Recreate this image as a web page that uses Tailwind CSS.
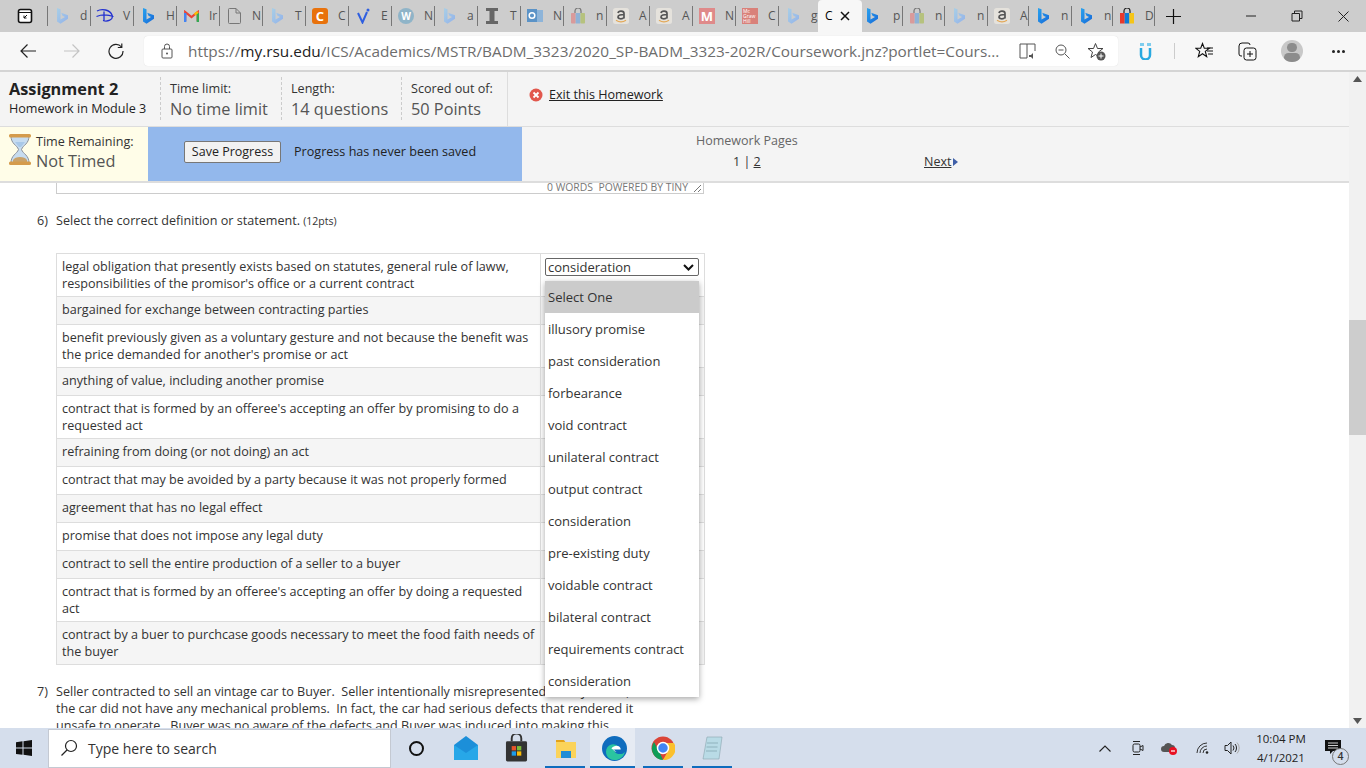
<!DOCTYPE html>
<html lang="en">
<head>
    <meta charset="UTF-8">
    <title>Coursework</title>
    <script src="https://cdn.jsdelivr.net/npm/@tailwindcss/browser@4"></script>
</head>
<body class="bg-white text-[#333] font-['Open_Sans',sans-serif] overflow-hidden">
<!-- shared tab icons -->
<svg class="absolute w-0 h-0">
    <defs>
        <linearGradient id="bgrad" x1="0" y1="0" x2="1" y2="1"><stop offset="0" stop-color="#2aa3ee"/><stop offset="1" stop-color="#1668d8"/></linearGradient>
        <linearGradient id="bfade" x1="0" y1="0" x2="1" y2="1"><stop offset="0" stop-color="#a9cfe6"/><stop offset="1" stop-color="#92b2ea"/></linearGradient>
    </defs>
    <symbol id="bing" viewBox="0 0 11 16"><path d="M0 0l3.500 1.200V11.500L8 9 5.500 7.800 4.200 4.800 11 7.200v3.600L3.500 15.700 0 13.500z" fill="url(#bgrad)"/></symbol>
    <symbol id="bingfade" viewBox="0 0 11 16"><path d="M0 0l3.500 1.200V11.500L8 9 5.500 7.800 4.200 4.800 11 7.200v3.600L3.500 15.700 0 13.500z" fill="url(#bfade)"/></symbol>
    <symbol id="bag" viewBox="0 0 16 16"><path d="M5 5V3a3 3 0 0 1 6 0v2" fill="none" stroke="#777" stroke-width="1.200"/><rect x="1" y="5" width="4.700" height="10.500" rx=".8" fill="#d99a9a"/><rect x="5.700" y="5" width="4.700" height="10.500" fill="#8fb2d6"/><rect x="10.400" y="5" width="4.600" height="10.500" rx=".8" fill="#b6c27e"/></symbol>
    <symbol id="amazon" viewBox="0 0 16 16"><rect width="16" height="16" rx="2.500" fill="#e5e2dc"/><path d="M5 5c.5-2.500 6-2.500 6 .5v5M11 6.500C8 6.500 5 7 5 9s4 2.500 6 .5" fill="none" stroke="#555" stroke-width="1.700"/><path d="M3 12.300c3 2 7 2 10 0" fill="none" stroke="#e3a857" stroke-width="1.200"/></symbol>
</svg>

<div class="w-[1366px] h-[768px] flex flex-col overflow-hidden">
    <!-- TAB STRIP -->
    <div class="h-[32px] bg-[#cdcdcd] flex items-center shrink-0 text-[12px] text-[#555] relative">
        <div class="w-[47px] flex justify-center pl-[2px]">
            <svg width="16" height="16" viewBox="0 0 16 16"><rect x="1.500" y="1.500" width="13" height="13" rx="2" fill="#fff" stroke="#111" stroke-width="1.600"/><path d="M1.500 4.500h13" stroke="#111"/><path d="M10 7l-3 3M7 7.500V10h2.500" fill="none" stroke="#111"/></svg>
        </div>
        <div class="w-[43px] h-[20px] border-l border-[#777] flex items-center pl-[2px] overflow-hidden"><div class="w-[24px] flex justify-center"><svg class="w-[11px] h-[16px]"><use href="#bingfade"/></svg></div><span class="ml-[6px]">d</span></div>
        <div class="w-[43px] h-[20px] border-l border-[#777] flex items-center pl-[2px] overflow-hidden"><div class="w-[24px] flex justify-center"><svg width="18" height="16" viewBox="0 0 18 16"><path d="M1 3c5-3 13-1 15 4s-5 7-9 5.500M8 3.500V13M.5 8.500c5-2 11-2 17 0" fill="none" stroke="#2231d0" stroke-width="1.300"/></svg></div><span class="ml-[6px]">V</span></div>
        <div class="w-[43px] h-[20px] border-l border-[#777] flex items-center pl-[2px] overflow-hidden"><div class="w-[24px] flex justify-center"><svg class="w-[11px] h-[16px]"><use href="#bing"/></svg></div><span class="ml-[6px]">H</span></div>
        <div class="w-[43px] h-[20px] border-l border-[#777] flex items-center pl-[2px] overflow-hidden"><div class="w-[24px] flex justify-center"><svg width="15" height="12" viewBox="0 0 15 12"><path d="M1.200 11V2l6.300 5 6.300-5v9" fill="none" stroke="#ea4335" stroke-width="2.200"/><path d="M1.200 12V3" stroke="#4285f4" stroke-width="2.400"/><path d="M13.800 12V3" stroke="#34a853" stroke-width="2.400"/><path d="M10.500 4.500l3.300-2.500" stroke="#fbbc04" stroke-width="2.200"/></svg></div><span class="ml-[6px]">Ir</span></div>
        <div class="w-[43px] h-[20px] border-l border-[#777] flex items-center pl-[2px] overflow-hidden"><div class="w-[24px] flex justify-center"><svg width="13" height="16" viewBox="0 0 13 16"><path d="M1.500.500h6.500l4.500 4.500v9.500a1 1 0 0 1-1 1h-10a1 1 0 0 1-1-1V1.500a1 1 0 0 1 1-1zM8 .500v4.500h4.500" fill="none" stroke="#777"/></svg></div><span class="ml-[6px]">N</span></div>
        <div class="w-[43px] h-[20px] border-l border-[#777] flex items-center pl-[2px] overflow-hidden"><div class="w-[24px] flex justify-center"><svg class="w-[11px] h-[16px]"><use href="#bingfade"/></svg></div><span class="ml-[6px]">T</span></div>
        <div class="w-[43px] h-[20px] border-l border-[#777] flex items-center pl-[2px] overflow-hidden"><div class="w-[24px] flex justify-center"><div class="w-[16px] h-[16px] bg-[#e8720c] rounded-[3px] text-white font-bold text-[13px] leading-[16px] text-center">C</div></div><span class="ml-[6px]">C</span></div>
        <div class="w-[43px] h-[20px] border-l border-[#777] flex items-center pl-[2px] overflow-hidden"><div class="w-[24px] flex justify-center"><svg width="13" height="16" viewBox="0 0 13 16"><path d="M1 5l4.500 9.500L10 4" fill="none" stroke="#2f5fe0" stroke-width="2"/><circle cx="11" cy="2" r="1.500" fill="#2f5fe0"/></svg></div><span class="ml-[6px]">E</span></div>
        <div class="w-[43px] h-[20px] border-l border-[#777] flex items-center pl-[2px] overflow-hidden"><div class="w-[24px] flex justify-center"><div class="w-[16px] h-[16px] bg-[#8fb4c8] rounded-full text-white font-bold text-[10px] leading-[16px] text-center">W</div></div><span class="ml-[6px]">N</span></div>
        <div class="w-[43px] h-[20px] border-l border-[#777] flex items-center pl-[2px] overflow-hidden"><div class="w-[24px] flex justify-center"><svg class="w-[11px] h-[16px]"><use href="#bingfade"/></svg></div><span class="ml-[6px]">a</span></div>
        <div class="w-[43px] h-[20px] border-l border-[#777] flex items-center pl-[2px] overflow-hidden"><div class="w-[24px] flex justify-center"><svg width="12" height="16" viewBox="0 0 12 16"><path d="M0 0h12v3H8.500v10H12v3H0v-3h3.500V3H0z" fill="#666"/></svg></div><span class="ml-[6px]">T</span></div>
        <div class="w-[43px] h-[20px] border-l border-[#777] flex items-center pl-[2px] overflow-hidden"><div class="w-[24px] flex justify-center"><svg width="16" height="16" viewBox="0 0 16 16"><rect x="5" y="2" width="11" height="12" fill="#8db4d9"/><rect y="1" width="10" height="13" fill="#5b93c7"/><circle cx="5" cy="7.500" r="2.800" fill="none" stroke="#fff" stroke-width="1.500"/></svg></div><span class="ml-[6px]">N</span></div>
        <div class="w-[43px] h-[20px] border-l border-[#777] flex items-center pl-[2px] overflow-hidden"><div class="w-[24px] flex justify-center"><svg class="w-[16px] h-[16px]"><use href="#bag"/></svg></div><span class="ml-[6px]">n</span></div>
        <div class="w-[43px] h-[20px] border-l border-[#777] flex items-center pl-[2px] overflow-hidden"><div class="w-[24px] flex justify-center"><svg class="w-[16px] h-[16px]"><use href="#amazon"/></svg></div><span class="ml-[6px]">A</span></div>
        <div class="w-[43px] h-[20px] border-l border-[#777] flex items-center pl-[2px] overflow-hidden"><div class="w-[24px] flex justify-center"><svg class="w-[16px] h-[16px]"><use href="#amazon"/></svg></div><span class="ml-[6px]">A</span></div>
        <div class="w-[43px] h-[20px] border-l border-[#777] flex items-center pl-[2px] overflow-hidden"><div class="w-[24px] flex justify-center"><div class="w-[16px] h-[16px] bg-[#df8a8a] text-white font-bold text-[13px] leading-[16px] text-center">M</div></div><span class="ml-[6px]">N</span></div>
        <div class="w-[43px] h-[20px] border-l border-[#777] flex items-center pl-[2px] overflow-hidden"><div class="w-[24px] flex justify-center"><div class="w-[16px] h-[16px] bg-[#d9817a] text-white text-[5px] leading-[5px] pl-[1px] pt-[1px]">Mc Graw Hill</div></div><span class="ml-[6px]">C</span></div>
        <div class="w-[43px] h-[20px] border-l border-[#777] flex items-center pl-[2px] overflow-hidden"><div class="w-[24px] flex justify-center"><svg class="w-[11px] h-[16px]"><use href="#bingfade"/></svg></div><span class="ml-[6px]">g</span></div>
        <!-- active tab -->
        <div class="w-[44px] -ml-[3px] h-[32px] bg-[#f7f7f7] rounded-t-[4px] flex items-center pl-[7px] text-black relative"><span>C</span><svg class="ml-[7px]" width="10" height="10" viewBox="0 0 10 10"><path d="M1 1l8 8M9 1l-8 8" stroke="#111" stroke-width="1.500"/></svg></div>
        <div class="w-[40px] h-[20px] flex items-center overflow-hidden"><div class="w-[24px] -ml-[2px] flex justify-center"><svg class="w-[11px] h-[16px]"><use href="#bing"/></svg></div><span class="ml-[9px]">p</span></div>
        <div class="w-[42px] h-[20px] border-l border-[#777] flex items-center pl-[2px] overflow-hidden"><div class="w-[24px] flex justify-center"><svg class="w-[16px] h-[16px]"><use href="#bag"/></svg></div><span class="ml-[6px]">n</span></div>
        <div class="w-[43px] h-[20px] border-l border-[#777] flex items-center pl-[2px] overflow-hidden"><div class="w-[24px] flex justify-center"><svg class="w-[11px] h-[16px]"><use href="#bingfade"/></svg></div><span class="ml-[6px]">n</span></div>
        <div class="w-[41px] h-[20px] border-l border-[#777] flex items-center pl-[2px] overflow-hidden"><div class="w-[24px] flex justify-center"><svg class="w-[16px] h-[16px]"><use href="#amazon"/></svg></div><span class="ml-[6px]">A</span></div>
        <div class="w-[43px] h-[20px] border-l border-[#777] flex items-center pl-[2px] overflow-hidden"><div class="w-[24px] flex justify-center"><svg class="w-[11px] h-[16px]"><use href="#bing"/></svg></div><span class="ml-[6px]">n</span></div>
        <div class="w-[41px] h-[20px] border-l border-[#777] flex items-center pl-[2px] overflow-hidden"><div class="w-[24px] flex justify-center"><svg class="w-[11px] h-[16px]"><use href="#bing"/></svg></div><span class="ml-[6px]">n</span></div>
        <div class="w-[43px] h-[20px] border-x border-[#777] flex items-center pl-[2px] overflow-hidden">
            <div class="w-[24px] flex justify-center"><svg width="16" height="16" viewBox="0 0 16 16"><path d="M5 5V3a3 3 0 0 1 6 0v2" fill="none" stroke="#222" stroke-width="1.200"/><rect x="1" y="5" width="4.700" height="10.500" fill="#e8392b"/><rect x="5.700" y="5" width="4.700" height="10.500" fill="#0c7bd8"/><rect x="10.400" y="5" width="4.600" height="10.500" fill="#f5c518"/></svg></div><span class="ml-[6px]">D</span>
        </div>
        <svg class="ml-[11px]" width="15" height="15" viewBox="0 0 15 15"><path d="M7.500 0v15M0 7.500h15" stroke="#111" stroke-width="1.200"/></svg>
        <!-- window controls -->
        <div class="ml-auto flex items-center h-full">
            <div class="w-[46px] flex justify-center"><svg width="10" height="10" viewBox="0 0 10 10"><path d="M0 5h10" stroke="#222"/></svg></div>
            <div class="w-[46px] flex justify-center"><svg width="12" height="12" viewBox="0 0 12 12"><path d="M1 3.500h7.500V11H1zM3.500 3.500V1H11v7.500H8.500" fill="none" stroke="#222"/></svg></div>
            <div class="w-[46px] flex justify-center"><svg width="11" height="11" viewBox="0 0 11 11"><path d="M.5.500l10 10M10.500.500l-10 10" stroke="#222"/></svg></div>
        </div>
    </div>

    <!-- ADDRESS BAR -->
    <div class="h-[38px] bg-[#f7f7f7] flex items-center shrink-0">
        <div class="w-[56px] flex justify-center"><svg width="16" height="16" viewBox="0 0 16 16"><path d="M16 8H1M7.500 1.500L1 8l6.500 6.500" fill="none" stroke="#222" stroke-width="1.200"/></svg></div>
        <div class="w-[32px] flex justify-center"><svg width="16" height="16" viewBox="0 0 16 16"><path d="M0 8h15M8.500 1.500L15 8l-6.500 6.500" fill="none" stroke="#c4c4c4" stroke-width="1.200"/></svg></div>
        <div class="w-[56px] flex justify-center"><svg width="16" height="16" viewBox="0 0 16 16"><path d="M13.500 4A7 7 0 1 0 15 8M13.800 .500V4.500H9.800" fill="none" stroke="#222" stroke-width="1.200"/></svg></div>
        <div class="w-[974px] h-[30px] bg-white rounded-[4px] flex items-center shadow-[0_0_1px_rgba(0,0,0,0.15)]">
            <svg class="ml-[17px] shrink-0" width="12" height="16" viewBox="0 0 12 16"><rect x="1" y="6" width="10" height="9" rx="1" fill="none" stroke="#555"/><path d="M3.500 6V3.500a2.500 2.500 0 0 1 5 0V6" fill="none" stroke="#555"/><circle cx="6" cy="10.500" r="1" fill="#555"/></svg>
            <div class="ml-[15px] pt-[2px] text-[15.350px] text-[#6d6d6d] whitespace-nowrap w-[813px] overflow-hidden">https://<span class="text-[#222]">my.rsu.edu</span>/ICS/Academics/MSTR/BADM_3323/2020_SP-BADM_3323-202R/Coursework.jnz?portlet=Cours...</div>
            <svg class="ml-[18px] shrink-0" width="18" height="18" viewBox="0 0 18 18"><path d="M1 2h7v14H1zM8 2h8v7" fill="none" stroke="#555"/><path d="M10 13h2l2-2v6l-2-2h-2z" fill="#555"/></svg>
            <svg class="ml-[18px] shrink-0" width="15" height="15" viewBox="0 0 15 15"><circle cx="6" cy="6" r="5" fill="none" stroke="#555"/><path d="M3.500 6h5M10 10l4.500 4.500" fill="none" stroke="#555"/></svg>
            <svg class="ml-[17px] shrink-0" width="19" height="19" viewBox="0 0 19 19"><path d="M8.500 1.500l2 5h5.500l-4.500 3.500 1.500 5.500-4.500-3-4.500 3 1.500-5.500L1 6.500h5.500z" fill="none" stroke="#444"/><circle cx="14" cy="14" r="4.500" fill="#555"/><path d="M14 11.500v5M11.500 14h5" stroke="#fff"/></svg>
        </div>
        <svg class="ml-[21px]" width="13" height="18" viewBox="0 0 13 18"><path d="M2 6v7a4.500 4.500 0 0 0 9 0V6" fill="none" stroke="#29a9e0" stroke-width="2.500"/><path d="M1 1h4v3H1zM8 1h4v3H8z" fill="#7fcdee"/></svg>
        <div class="w-px h-[16px] bg-[#ccc] ml-[22px]"></div>
        <svg class="ml-[20px]" width="19" height="18" viewBox="0 0 19 18"><path d="M7.500 1.500l1.800 4.700h5l-4 3.200 1.400 5.300-4.200-3-4.200 3 1.400-5.300-4-3.200h5z" fill="none" stroke="#111" stroke-width="1.100"/><path d="M12 9h6M13 12h5M12 6h6" stroke="#111"/></svg>
        <svg class="ml-[24px]" width="19" height="19" viewBox="0 0 19 19"><path d="M4 14H3a2 2 0 0 1-2-2V4a3 3 0 0 1 3-3h6a2 2 0 0 1 2 2" fill="none" stroke="#111"/><rect x="6" y="6" width="12" height="12" rx="2.500" fill="none" stroke="#111"/><path d="M12 9v6M9 12h6" stroke="#111"/></svg>
        <div class="ml-[24px] w-[22px] h-[22px] rounded-full bg-[#c8c8c8] overflow-hidden flex flex-col items-center">
            <div class="w-[10px] h-[10px] mt-[3px] rounded-full bg-[#8c8c8c]"></div>
            <div class="w-[16px] h-[10px] mt-[1px] rounded-full bg-[#8c8c8c]"></div>
        </div>
        <div class="ml-[29px] flex gap-[2px]"><div class="w-[3px] h-[3px] rounded-full bg-[#222]"></div><div class="w-[3px] h-[3px] rounded-full bg-[#222]"></div><div class="w-[3px] h-[3px] rounded-full bg-[#222]"></div></div>
    </div>

    <!-- BROWSER PAGE -->
    <div class="flex-1 min-h-0 flex border-t-2 border-[#d4d4d4]">
        <div class="flex-1 min-w-0 flex flex-col relative">
            <!-- homework header -->
            <div class="h-[55px] shrink-0 bg-[#f4f4f4] border-b border-[#ddd] flex">
                <div class="w-[160px] pl-[9px] pt-[5px] text-[#222]">
                    <div class="text-[16.300px] leading-[24px] font-bold">Assignment 2</div>
                    <div class="text-[12.600px] leading-[17px] -mt-[1px]">Homework in Module 3</div>
                </div>
                <div class="mt-[5px] h-[43px] border-l border-dashed border-[#ccc] pl-[9px] pt-[3px] w-[121px]">
                    <div class="text-[12.600px] leading-[17px]">Time limit:</div>
                    <div class="text-[16.300px] leading-[24px] text-[#555]">No time limit</div>
                </div>
                <div class="mt-[5px] h-[43px] border-l border-dashed border-[#ccc] pl-[9px] pt-[3px] w-[120px]">
                    <div class="text-[12.600px] leading-[17px]">Length:</div>
                    <div class="text-[16.300px] leading-[24px] text-[#555]">14 questions</div>
                </div>
                <div class="mt-[5px] h-[43px] border-l border-dashed border-[#ccc] pl-[9px] pt-[3px] w-[106px]">
                    <div class="text-[12.600px] leading-[17px]">Scored out of:</div>
                    <div class="text-[16.300px] leading-[24px] text-[#555]">50 Points</div>
                </div>
                <div class="h-[54px] border-l border-[#ddd] pl-[21px] flex items-center gap-[6px] pb-[8px]">
                    <svg width="14" height="14" viewBox="0 0 14 14"><circle cx="7" cy="7" r="6.500" fill="#e2574c"/><path d="M4.500 4.500l5 5M9.500 4.500l-5 5" stroke="#fff" stroke-width="1.800"/></svg>
                    <a class="text-[12.600px] underline text-[#222]">Exit this Homework</a>
                </div>
            </div>
            <div class="h-[56px] shrink-0 bg-[#f4f4f4] border-b-2 border-[#ddd] flex">
                <div class="w-[148px] bg-[#fffde8] flex pl-[8px] items-start pt-[6px]">
                    <svg class="shrink-0" width="24" height="33" viewBox="0 0 24 33"><path d="M3 3h18c0 8-6 9-7.500 13.500C15 21 21 22 21 30H3c0-8 6-9 7.500-13.500C9 12 3 11 3 3z" fill="#c7dcf0" stroke="#8a8f98"/><path d="M5 27c2-4 12-4 14 0v3H5z" fill="#c9a26a"/><path d="M7 9h10l-4 5h-2z" fill="#a9c8e8"/><rect x="1" y="1" width="22" height="3.500" rx="1.500" fill="#d59b4c"/><rect x="1" y="28.500" width="22" height="3.500" rx="1.500" fill="#d59b4c"/></svg>
                    <div class="ml-[4px]">
                        <div class="text-[12.600px] leading-[17px]">Time Remaining:</div>
                        <div class="text-[16.300px] leading-[23px] text-[#555]">Not Timed</div>
                    </div>
                </div>
                <div class="w-[374px] bg-[#93b8ec] flex items-center pl-[36px] pb-[4px]">
                    <div class="w-[97px] h-[22px] bg-[#f2f2f2] border border-[#777] rounded-[2px] text-[12.500px] leading-[20px] text-center text-[#222]">Save Progress</div>
                    <div class="ml-[13px] text-[12.600px] text-[#222]">Progress has never been saved</div>
                </div>
                <div class="flex-1 relative text-[12.500px] text-[#333]">
                    <div class="absolute left-[174px] top-[5px] text-[#666]">Homework Pages</div>
                    <div class="absolute left-[211px] top-[26px]">1 | <span class="underline">2</span></div>
                    <div class="absolute left-[402px] top-[26px] flex items-center gap-[2px]"><span class="underline">Next</span><svg width="5" height="8" viewBox="0 0 5 8"><path d="M0 0l5 4-5 4z" fill="#3f5fa8"/></svg></div>
                </div>
            </div>

            <!-- questions -->
            <div class="flex-1 min-h-0 overflow-hidden relative text-[12.600px] leading-[17px] text-[#333]">
                <div class="ml-[56px] w-[648px] h-[11px] border border-t-0 border-[#ccc] flex justify-end items-start overflow-hidden">
                    <div class="text-[10.400px] leading-[12px] text-[#777] mr-[15px] -mt-[2px]">0 WORDS&nbsp; POWERED BY TINY</div>
                    <svg class="absolute left-[693px] top-[1px]" width="9" height="9" viewBox="0 0 9 9"><path d="M1 8l7-7M5 8l3-3" stroke="#777"/></svg>
                </div>
                <div class="mt-[18px] flex">
                    <div class="w-[56px] pl-[37px]">6)</div>
                    <div>Select the correct definition or statement. <span class="text-[10.500px]">(12pts)</span></div>
                </div>
                <table class="ml-[56px] mt-[23px] w-[649px] border-collapse table-fixed">
                    <colgroup><col class="w-[484px]"><col></colgroup>
                    <tbody>
                        <tr class="h-[43px] bg-white"><td class="border border-[#ddd] px-[5px]">legal obligation that presently exists based on statutes, general rule of laww, responsibilities of the promisor's office or a current contract</td><td class="border border-[#ddd] pl-[4px] align-top pt-[4px]">
                            <div class="w-[154px] h-[18px] border border-[#666] rounded-[2px] bg-white flex items-center justify-between pl-[2px] pr-[4px] text-[13px]"><span>consideration</span><svg width="11" height="7" viewBox="0 0 11 7"><path d="M1 1l4.500 4.500L10 1" fill="none" stroke="#111" stroke-width="2"/></svg></div>
                        </td></tr>
                        <tr class="h-[28px] bg-[#f5f5f5]"><td class="border border-[#ddd] px-[5px] pb-[2px]">bargained for exchange between contracting parties</td><td class="border border-[#ddd]"></td></tr>
                        <tr class="h-[43px] bg-white"><td class="border border-[#ddd] px-[5px]">benefit previously given as a voluntary gesture and not because the benefit was the price demanded for another's promise or act</td><td class="border border-[#ddd]"></td></tr>
                        <tr class="h-[28px] bg-[#f5f5f5]"><td class="border border-[#ddd] px-[5px] pb-[2px]">anything of value, including another promise</td><td class="border border-[#ddd]"></td></tr>
                        <tr class="h-[43px] bg-white"><td class="border border-[#ddd] px-[5px]">contract that is formed by an offeree's accepting an offer by promising to do a requested act</td><td class="border border-[#ddd]"></td></tr>
                        <tr class="h-[28px] bg-[#f5f5f5]"><td class="border border-[#ddd] px-[5px] pb-[2px]">refraining from doing (or not doing) an act</td><td class="border border-[#ddd]"></td></tr>
                        <tr class="h-[28px] bg-white"><td class="border border-[#ddd] px-[5px] pb-[2px]">contract that may be avoided by a party because it was not properly formed</td><td class="border border-[#ddd]"></td></tr>
                        <tr class="h-[28px] bg-[#f5f5f5]"><td class="border border-[#ddd] px-[5px] pb-[2px]">agreement that has no legal effect</td><td class="border border-[#ddd]"></td></tr>
                        <tr class="h-[28px] bg-white"><td class="border border-[#ddd] px-[5px] pb-[2px]">promise that does not impose any legal duty</td><td class="border border-[#ddd]"></td></tr>
                        <tr class="h-[28px] bg-[#f5f5f5]"><td class="border border-[#ddd] px-[5px] pb-[2px]">contract to sell the entire production of a seller to a buyer</td><td class="border border-[#ddd]"></td></tr>
                        <tr class="h-[43px] bg-white"><td class="border border-[#ddd] px-[5px]">contract that is formed by an offeree's accepting an offer by doing a requested act</td><td class="border border-[#ddd]"></td></tr>
                        <tr class="h-[43px] bg-[#f5f5f5]"><td class="border border-[#ddd] px-[5px]">contract by a buer to purchcase goods necessary to meet the food faith needs of the buyer</td><td class="border border-[#ddd]"></td></tr>
                    </tbody>
                </table>
                <div class="mt-[18px] flex">
                    <div class="w-[56px] pl-[37px]">7)</div>
                    <div class="whitespace-nowrap">Seller contracted to sell an vintage car to Buyer.&nbsp; Seller intentionally misrepresented to Buyer that,<br>the car did not have any mechanical problems.&nbsp; In fact, the car had serious defects that rendered it<br>unsafe to operate.&nbsp; Buyer was no aware of the defects and Buyer was induced into making this</div>
                </div>

                <!-- open select dropdown -->
                <div class="absolute left-[545px] top-[98px] w-[154px] bg-white shadow-[0_2px_6px_rgba(0,0,0,0.35)] text-[13px] text-[#333]">
                    <div class="h-[32px] pl-[3px] flex items-center bg-[#cbcbcb]">Select One</div>
                    <div class="h-[32px] pl-[3px] flex items-center">illusory promise</div>
                    <div class="h-[32px] pl-[3px] flex items-center">past consideration</div>
                    <div class="h-[32px] pl-[3px] flex items-center">forbearance</div>
                    <div class="h-[32px] pl-[3px] flex items-center">void contract</div>
                    <div class="h-[32px] pl-[3px] flex items-center">unilateral contract</div>
                    <div class="h-[32px] pl-[3px] flex items-center">output contract</div>
                    <div class="h-[32px] pl-[3px] flex items-center">consideration</div>
                    <div class="h-[32px] pl-[3px] flex items-center">pre-existing duty</div>
                    <div class="h-[32px] pl-[3px] flex items-center">voidable contract</div>
                    <div class="h-[32px] pl-[3px] flex items-center">bilateral contract</div>
                    <div class="h-[32px] pl-[3px] flex items-center">requirements contract</div>
                    <div class="h-[32px] pl-[3px] flex items-center">consideration</div>
                </div>
            </div>
        </div>
        <!-- scrollbar -->
        <div class="w-[17px] shrink-0 bg-[#f1f1f1] flex flex-col items-center relative">
            <svg class="mt-[4px]" width="9" height="6" viewBox="0 0 9 6"><path d="M4.500 0L9 6H0z" fill="#555"/></svg>
            <div class="absolute top-[248px] left-0 w-full h-[115px] bg-[#cdcdcd]"></div>
            <svg class="mt-auto mb-[4px]" width="9" height="6" viewBox="0 0 9 6"><path d="M4.500 6L9 0H0z" fill="#555"/></svg>
        </div>
    </div>

    <!-- WINDOWS TASKBAR -->
    <div class="h-[40px] shrink-0 bg-[#d5deec] flex items-center relative">
        <div class="w-[48px] flex justify-center"><svg width="16" height="16" viewBox="0 0 16 16"><path d="M0 2.200l6.500-.9v6.300H0zM7.500 1.200L16 0v7.600H7.500zM0 8.500h6.500v6.300L0 13.900zM7.500 8.500H16V16l-8.500-1.200z" fill="#111"/></svg></div>
        <div class="w-[343px] h-[39px] bg-white border border-[#c4c9d2] flex items-center pl-[11px]">
            <svg width="18" height="18" viewBox="0 0 18 18"><circle cx="11" cy="7" r="5.500" fill="none" stroke="#222" stroke-width="1.200"/><path d="M7 11l-5.500 5.500" stroke="#222" stroke-width="1.300"/></svg>
            <span class="ml-[10px] text-[14px] text-[#333]">Type here to search</span>
        </div>
        <div class="w-[50px] flex justify-center"><div class="w-[15px] h-[15px] rounded-full border-[2.500px] border-[#111]"></div></div>
        <div class="w-[50px] flex justify-center"><svg width="24" height="24" viewBox="0 0 24 24"><path d="M0 9L12 0l12 9v15H0z" fill="#1c8fd9"/><path d="M0 9l12 8 12-8v15H0z" fill="#27a7e8"/></svg></div>
        <div class="w-[50px] flex justify-center"><svg width="23" height="28" viewBox="0 0 24 28"><path d="M7 7V4a5 5 0 0 1 10 0v3" fill="none" stroke="#333" stroke-width="2"/><rect x="1" y="7" width="22" height="21" rx="1.500" fill="#333"/><rect x="7" y="12" width="4.500" height="4.500" fill="#e8532a"/><rect x="12.500" y="12" width="4.500" height="4.500" fill="#7cbb3a"/><rect x="7" y="17.500" width="4.500" height="4.500" fill="#1c9be8"/><rect x="12.500" y="17.500" width="4.500" height="4.500" fill="#fbbc04"/></svg></div>
        <div class="w-[49px] flex justify-center"><svg width="22" height="22" viewBox="0 0 22 22"><path d="M1 3h8l2 3H1z" fill="#e3a21a"/><rect x="1" y="5" width="20" height="16" fill="#fbd35a"/><rect x="6" y="14" width="10" height="7" fill="#1f8dd6"/></svg></div>
        <div class="w-[45px] h-[40px] bg-[#e6ebf3] flex justify-center items-center pl-[3px]"><svg width="25" height="25" viewBox="0 0 24 24"><circle cx="12" cy="12" r="12" fill="#0f6cbd"/><path d="M22 15c-2 3-7 3-9 1s-1-5 2-6c-2-3-7-3-10 1-3 5 0 12 7 12 5 0 9-3 10-8z" fill="#2ac4a0"/><path d="M9 12c3-4 9-3 9 1h-7c0 1 1 2 3 2" fill="#fff"/></svg></div>
        <div class="w-[56px] flex justify-center"><svg width="24" height="24" viewBox="0 0 24 24"><circle cx="12" cy="12" r="11.500" fill="#db4437"/><path d="M12 24a11.500 11.500 0 0 1-9-18l6 11z" fill="#0f9d58"/><path d="M12 24a11.500 11.500 0 0 0 11-17H12l5 8z" fill="#fbc02d"/><circle cx="12" cy="12" r="5.500" fill="#4285f4" stroke="#fff" stroke-width="1.500"/></svg></div>
        <div class="w-[42px] flex justify-center"><svg width="24" height="24" viewBox="0 0 22 24"><path d="M6 1h15l-3 22H2z" fill="#b9dbe6" stroke="#8aa5ae" stroke-width=".6"/><path d="M6 7h11M5.500 11h11M5 15h11" stroke="#8fb2bd"/></svg></div>
        <!-- running indicators -->
        <div class="absolute left-[545px] bottom-0 w-[40px] h-[2px] bg-[#0f6cbd]"></div>
        <div class="absolute left-[590px] bottom-0 w-[45px] h-[2px] bg-[#0f6cbd]"></div>
        <div class="absolute left-[643px] bottom-0 w-[40px] h-[2px] bg-[#0f6cbd]"></div>
        <div class="absolute left-[692px] bottom-0 w-[40px] h-[2px] bg-[#0f6cbd]"></div>
        <!-- tray -->
        <div class="ml-auto flex items-center">
            <svg width="12" height="7" viewBox="0 0 12 7"><path d="M.500 6.500L6 1l5.500 5.500" fill="none" stroke="#222" stroke-width="1.100"/></svg>
            <svg class="ml-[21px]" width="12" height="16" viewBox="0 0 12 16"><rect x="1" y="4" width="7" height="8" rx="1.500" fill="none" stroke="#222"/><path d="M8 7l3-1.500v5L8 9M1 1.500h7M1 14.500h7" fill="none" stroke="#222"/></svg>
            <svg class="ml-[17px]" width="17" height="14" viewBox="0 0 17 14"><path d="M3 11a3 3 0 0 1 0-6 4.500 4.500 0 0 1 8-1 3 3 0 0 1 3 3v4z" fill="#555"/><circle cx="12" cy="10" r="4" fill="#e81123"/><path d="M10 10h4" stroke="#fff" stroke-width="1.200"/></svg>
            <svg class="ml-[18px]" width="14" height="12" viewBox="0 0 14 12"><path d="M1 11a10 10 0 0 1 10-10M4 11a7 7 0 0 1 7-7M7 11a4 4 0 0 1 4-4" fill="none" stroke="#333"/><circle cx="11" cy="10.500" r="1.300" fill="#222"/></svg>
            <svg class="ml-[14px]" width="16" height="14" viewBox="0 0 16 14"><path d="M1 4.500h2.500L7 1v12L3.500 9.500H1z" fill="none" stroke="#222"/><path d="M9 4.500a4 4 0 0 1 0 5M11 3a6 6 0 0 1 0 8" fill="none" stroke="#222"/><path d="M13 1.500a8 8 0 0 1 0 11" fill="none" stroke="#aaa"/></svg>
            <div class="w-[74px] ml-[4px] text-[11.500px] leading-[19px] text-center text-[#222]">
                <div>10:04 PM</div>
                <div>4/1/2021</div>
            </div>
            <div class="w-[48px] relative h-[40px]">
                <svg class="absolute left-[7px] top-[12px]" width="16" height="15" viewBox="0 0 16 15"><path d="M0 0h16v11H8l-3 3v-3H0z" fill="#111"/><path d="M3 3h10M3 5.500h10M3 8h10" stroke="#fff" stroke-width=".8"/></svg>
                <div class="absolute left-[14px] top-[20px] w-[17px] h-[17px] rounded-full bg-[#d5deec] border border-[#777] text-[10.500px] leading-[15px] text-center font-semibold">4</div>
            </div>
        </div>
    </div>
</div>
</body>
</html>
